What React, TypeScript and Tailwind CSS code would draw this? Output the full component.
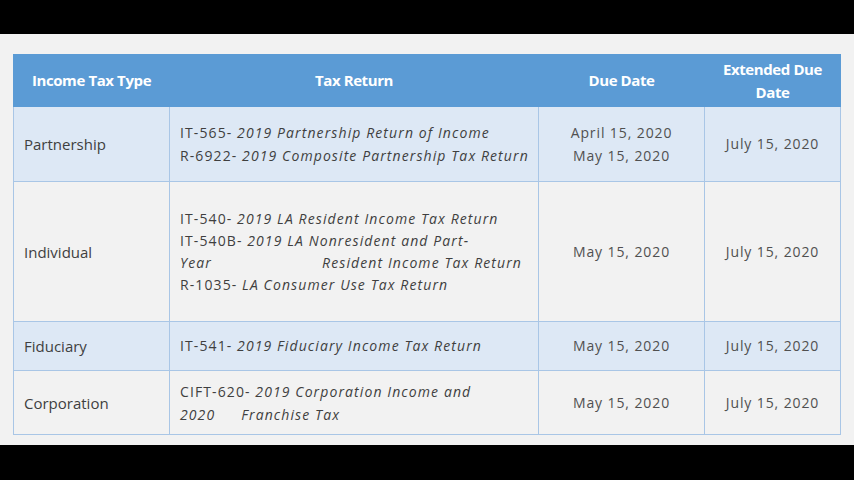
import React from "react";

const dates = "text-center align-middle text-[#505050] tracking-[0.9px]";

export default function App() {
  return (
    <div className="w-[854px] h-[480px] bg-black flex flex-col" style={{ fontFamily: '"Open Sans", "Liberation Sans", sans-serif' }}>
      <div className="h-[34px] shrink-0" />
      <div className="h-[411px] bg-[#f2f2f2] pt-[20px] pl-[13px]">
        <table className="border-collapse text-[14px] leading-[22px] text-[#3f3f3f]">
          <colgroup>
            <col className="w-[156px]" />
            <col className="w-[369px]" />
            <col className="w-[166px]" />
            <col className="w-[136px]" />
          </colgroup>
          <thead>
            <tr className="h-[52px] bg-[#5b9bd5] text-white text-[15px] leading-[23px] font-bold tracking-[-0.4px]">
              <th className="border border-[#5b9bd5] text-center">Income Tax Type</th>
              <th className="border border-[#5b9bd5] text-center">Tax Return</th>
              <th className="border border-[#5b9bd5] text-center">Due Date</th>
              <th className="border border-[#5b9bd5] text-center">Extended Due<br />Date</th>
            </tr>
          </thead>
          <tbody>
            <tr className="h-[75px] bg-[#dde8f5]">
              <td className="border border-[#a9c6e6] pl-[10px] text-[15px]">Partnership</td>
              <td className="border border-[#a9c6e6] pl-[10px] leading-[23px] tracking-[1.1px]">
                <div>IT-565- <i>2019 Partnership Return of Income</i></div>
                <div>R-6922- <i>2019 Composite Partnership Tax Return</i></div>
              </td>
              <td className={`border border-[#a9c6e6] leading-[23px] ${dates}`}>April 15, 2020<br />May 15, 2020</td>
              <td className={`border border-[#a9c6e6] ${dates}`}>July 15, 2020</td>
            </tr>
            <tr className="h-[140px] bg-[#f2f2f2]">
              <td className="border border-[#a9c6e6] pl-[10px] text-[15px]">Individual</td>
              <td className="border border-[#a9c6e6] pl-[10px] pr-[16px] tracking-[1.1px]">
                <div>IT-540- <i>2019 LA Resident Income Tax Return</i></div>
                <div>IT-540B- <i>2019 LA Nonresident and Part-</i></div>
                <div className="flex justify-between italic"><span>Year</span><span>Resident Income Tax Return</span></div>
                <div>R-1035- <i>LA Consumer Use Tax Return</i></div>
              </td>
              <td className={`border border-[#a9c6e6] ${dates}`}>May 15, 2020</td>
              <td className={`border border-[#a9c6e6] ${dates}`}>July 15, 2020</td>
            </tr>
            <tr className="h-[49px] bg-[#dde8f5]">
              <td className="border border-[#a9c6e6] pl-[10px] text-[15px]">Fiduciary</td>
              <td className="border border-[#a9c6e6] pl-[10px] tracking-[1.1px]">IT-541- <i>2019 Fiduciary Income Tax Return</i></td>
              <td className={`border border-[#a9c6e6] ${dates}`}>May 15, 2020</td>
              <td className={`border border-[#a9c6e6] ${dates}`}>July 15, 2020</td>
            </tr>
            <tr className="h-[64px] bg-[#f2f2f2]">
              <td className="border border-[#a9c6e6] pl-[10px] text-[15px]">Corporation</td>
              <td className="border border-[#a9c6e6] pl-[10px] leading-[23px] tracking-[1.1px]">
                <div>CIFT-620- <i>2019 Corporation Income and</i></div>
                <div className="italic flex gap-[26px]"><span>2020</span><span>Franchise Tax</span></div>
              </td>
              <td className={`border border-[#a9c6e6] ${dates}`}>May 15, 2020</td>
              <td className={`border border-[#a9c6e6] ${dates}`}>July 15, 2020</td>
            </tr>
          </tbody>
        </table>
      </div>
    </div>
  );
}
